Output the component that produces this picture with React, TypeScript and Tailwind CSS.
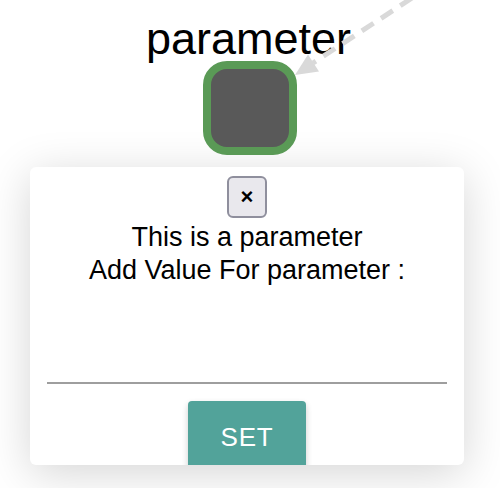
import React from 'react';

const Arrow: React.FC = () => (
  <svg className="absolute left-0 top-0 pointer-events-none" width="500" height="160" viewBox="0 0 500 160">
    <line x1="412" y1="-2" x2="313" y2="63" stroke="#d9d9d9" strokeWidth="5" strokeDasharray="14 9" />
    <polygon points="295,75 319,71.4 308,54.6" fill="#d9d9d9" />
  </svg>
);

const App: React.FC = () => {
  return (
    <div className="relative w-[500px] h-[488px] overflow-hidden bg-white font-['Liberation_Sans',Arial,sans-serif]">
      <Arrow />

      {/* node */}
      <div className="pt-[17px] flex flex-col items-center">
        <div className="text-[45px] leading-[44px] text-black ml-[-3px]">parameter</div>
        <div className="w-[94px] h-[94px] rounded-[24px] border-[8px] border-[#5a9a56] bg-[#595959]" />
      </div>

      {/* dialog */}
      <div className="ml-[30px] mt-[12px] w-[434px] h-[298px] rounded-[6px] bg-white overflow-hidden shadow-[0_8px_45px_rgba(0,0,0,0.17)] flex flex-col items-center">
        <button className="shrink-0 mt-[9px] w-[40px] h-[42px] rounded-[6px] border-2 border-[#8f8f9d] bg-[#e9e8ed] flex items-center justify-center text-[22px] font-bold leading-none text-black">
          ×
        </button>
        <div className="shrink-0 mt-[3px] text-[27px] leading-[33px] text-black text-center">
          <div>This is a parameter</div>
          <div>Add Value For parameter :</div>
        </div>
        <div className="shrink-0 mt-[55px] w-[400px] h-[42px] border-b-2 border-[#9e9e9e]" />
        <button className="shrink-0 mt-[17px] w-[118px] h-[72px] rounded-[4px] bg-[#52a39a] text-white text-[26px] tracking-[0.03em] shadow-[0_3px_6px_rgba(0,0,0,0.2)]">
          SET
        </button>
      </div>
    </div>
  );
};

export default App;
